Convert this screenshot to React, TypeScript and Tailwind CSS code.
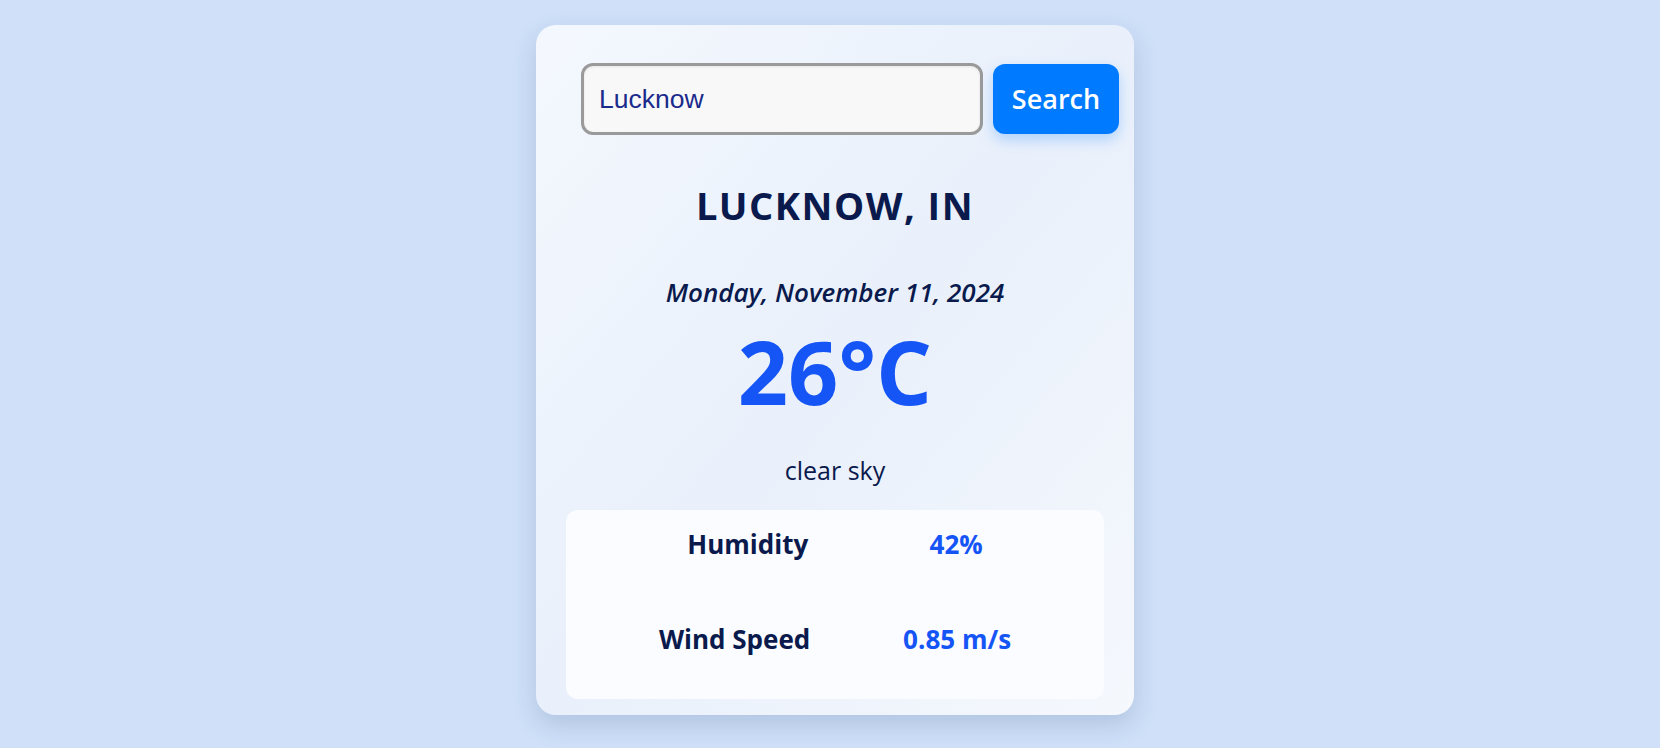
export default function App() {
  const font = { fontFamily: '"Open Sans", "Noto Sans", sans-serif' };

  return (
    <div className="min-h-screen w-full bg-[#cfe0f8] flex justify-center pt-[25px] pl-[10px]" style={font}>
      {/* Weather card */}
      <div className="w-[598px] h-[690px] rounded-[20px] px-[30px] pt-[38px] bg-gradient-to-br from-[#f4f8fe] via-[#e9f0fb] to-[#f5f8fd] shadow-[0_10px_24px_rgba(40,70,120,0.18)] flex flex-col">
        {/* Search form */}
        <form className="flex gap-[10px] ml-[15px] -mr-[15px]" onSubmit={(e) => e.preventDefault()}>
          <input
            defaultValue="Lucknow"
            className="w-[402px] h-[72px] rounded-[12px] border-[3px] border-[#9a9a9a] bg-[#f8f8f8] px-[15px] text-[26.5px] text-[#1a2b8c] outline-none shadow-[inset_0_1px_3px_rgba(0,0,0,0.08)]"
            style={{ fontFamily: '"Liberation Sans", Arial, sans-serif' }}
          />
          <button
            type="submit"
            className="w-[126px] h-[70px] mt-[1px] rounded-[12px] bg-[#007bff] text-white text-[27px] font-semibold shadow-[0_6px_14px_rgba(0,123,255,0.25)]"
          >
            Search
          </button>
        </form>

        {/* City */}
        <h2 className="mt-[46px] text-center text-[38px] leading-[48px] font-bold tracking-[1.5px] text-[#0a1a4d]">
          LUCKNOW, IN
        </h2>

        {/* Date */}
        <p className="mt-[47px] text-center text-[26px] leading-[32px] italic font-semibold text-[#0a1a4d]">
          Monday, November 11, 2024
        </p>

        {/* Temperature */}
        <p className="mt-[13px] text-center text-[88px] leading-[100px] font-bold text-[#1554f5]">
          26°C
        </p>

        {/* Description */}
        <p className="mt-[34px] text-center text-[25px] leading-[30px] font-medium text-[#0a1a4d]">
          clear sky
        </p>

        {/* Details */}
        <div className="mt-[25px] h-[189px] rounded-[12px] bg-[#fbfcff] pt-[14px] flex flex-col gap-[55px]">
          <div className="flex justify-evenly items-center h-[40px] text-[26px] font-bold">
            <span className="text-[#0a1a4d]">Humidity</span>
            <span className="text-[#1554f5]">42%</span>
          </div>
          <div className="flex justify-evenly items-center h-[40px] text-[26px] font-bold">
            <span className="text-[#0a1a4d]">Wind Speed</span>
            <span className="text-[#1554f5]">0.85 m/s</span>
          </div>
        </div>
      </div>
    </div>
  );
}
